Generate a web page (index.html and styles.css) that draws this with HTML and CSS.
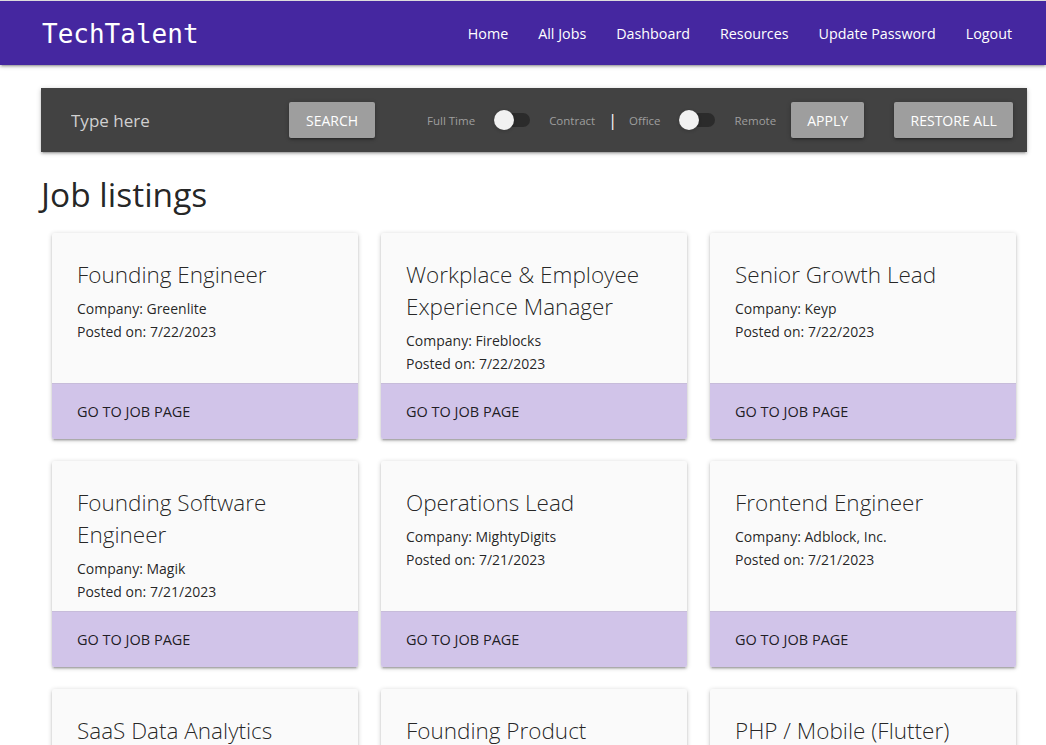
FILE: index.html
```html
<!DOCTYPE html>
<html lang="en">
<head>
<meta charset="utf-8">
<title>TechTalent</title>
<link rel="stylesheet" href="styles.css">
</head>
<body>
<nav class="navbar">
  <a class="brand" href="#">TechTalent</a>
  <ul class="nav-links">
    <li><a href="#">Home</a></li>
    <li><a href="#">All Jobs</a></li>
    <li><a href="#">Dashboard</a></li>
    <li><a href="#">Resources</a></li>
    <li><a href="#">Update Password</a></li>
    <li><a href="#">Logout</a></li>
  </ul>
</nav>

<main class="page">
  <section class="search-bar">
    <input class="search-input" type="text" placeholder="Type here">
    <button class="btn btn-search">Search</button>
    <div class="filters">
      <div class="switch-group">
        <span class="switch-label">Full Time</span>
        <span class="switch"><span class="knob"></span></span>
        <span class="switch-label">Contract</span>
      </div>
      <span class="divider">|</span>
      <div class="switch-group">
        <span class="switch-label">Office</span>
        <span class="switch"><span class="knob"></span></span>
        <span class="switch-label">Remote</span>
      </div>
    </div>
    <button class="btn btn-apply">Apply</button>
    <button class="btn btn-restore">Restore All</button>
  </section>

  <h1 class="heading">Job listings</h1>

  <div class="card-grid">
    <article class="card">
      <div class="card-content">
        <h2 class="card-title">Founding Engineer</h2>
        <p>Company: Greenlite</p>
        <p>Posted on: 7/22/2023</p>
      </div>
      <a class="card-action" href="#">Go to job page</a>
    </article>
    <article class="card">
      <div class="card-content">
        <h2 class="card-title">Workplace &amp; Employee Experience Manager</h2>
        <p>Company: Fireblocks</p>
        <p>Posted on: 7/22/2023</p>
      </div>
      <a class="card-action" href="#">Go to job page</a>
    </article>
    <article class="card">
      <div class="card-content">
        <h2 class="card-title">Senior Growth Lead</h2>
        <p>Company: Keyp</p>
        <p>Posted on: 7/22/2023</p>
      </div>
      <a class="card-action" href="#">Go to job page</a>
    </article>
    <article class="card">
      <div class="card-content">
        <h2 class="card-title">Founding Software Engineer</h2>
        <p>Company: Magik</p>
        <p>Posted on: 7/21/2023</p>
      </div>
      <a class="card-action" href="#">Go to job page</a>
    </article>
    <article class="card">
      <div class="card-content">
        <h2 class="card-title">Operations Lead</h2>
        <p>Company: MightyDigits</p>
        <p>Posted on: 7/21/2023</p>
      </div>
      <a class="card-action" href="#">Go to job page</a>
    </article>
    <article class="card">
      <div class="card-content">
        <h2 class="card-title">Frontend Engineer</h2>
        <p>Company: Adblock, Inc.</p>
        <p>Posted on: 7/21/2023</p>
      </div>
      <a class="card-action" href="#">Go to job page</a>
    </article>
    <article class="card">
      <div class="card-content">
        <h2 class="card-title">SaaS Data Analytics</h2>
        <p>Company: Datalytics</p>
        <p>Posted on: 7/21/2023</p>
      </div>
      <a class="card-action" href="#">Go to job page</a>
    </article>
    <article class="card">
      <div class="card-content">
        <h2 class="card-title">Founding Product Engineer</h2>
        <p>Company: Stealth</p>
        <p>Posted on: 7/21/2023</p>
      </div>
      <a class="card-action" href="#">Go to job page</a>
    </article>
    <article class="card">
      <div class="card-content">
        <h2 class="card-title">PHP / Mobile (Flutter)</h2>
        <p>Company: Appify</p>
        <p>Posted on: 7/21/2023</p>
      </div>
      <a class="card-action" href="#">Go to job page</a>
    </article>
  </div>
</main>
</body>
</html>
```

FILE: styles.css
```css
* {
  box-sizing: border-box;
}

html {
  overflow: hidden;
}

body {
  margin: 0;
  background: #ffffff;
  border-top: 1px solid #dcdcdc;
  font-family: "Open Sans", "Noto Sans", sans-serif;
  color: rgba(0, 0, 0, 0.87);
}

/* ---------- Navbar ---------- */
.navbar {
  height: 64px;
  background: #4527a0;
  display: flex;
  align-items: center;
  justify-content: space-between;
  padding: 0 19px 0 42px;
  box-shadow: 0 2px 2px 0 rgba(0,0,0,.14), 0 3px 1px -2px rgba(0,0,0,.12), 0 1px 5px 0 rgba(0,0,0,.2);
  position: relative;
  z-index: 2;
}

.brand {
  font-family: "DejaVu Sans Mono", "Liberation Mono", monospace;
  font-size: 26px;
  color: #ffffff;
  text-decoration: none;
  padding-top: 2px;
}

.nav-links {
  display: flex;
  list-style: none;
  margin: 0;
  padding: 0;
}

.nav-links a {
  display: block;
  padding: 2px 15px 0;
  line-height: 62px;
  color: #ffffff;
  text-decoration: none;
  font-size: 14.3px;
  white-space: nowrap;
}

/* ---------- Page ---------- */
.page {
  padding: 23px 19px 0 41px;
}

.search-bar {
  height: 64px;
  background: #424242;
  display: flex;
  align-items: center;
  padding: 0 15px 0 30px;
  box-shadow: 0 2px 2px 0 rgba(0,0,0,.14), 0 3px 1px -2px rgba(0,0,0,.12), 0 1px 5px 0 rgba(0,0,0,.2);
}

.search-input {
  width: 218px;
  flex-shrink: 0;
  border: none;
  background: transparent;
  font-family: inherit;
  font-size: 17px;
  color: #d6d6d6;
  outline: none;
  padding: 0;
}

.search-input::placeholder {
  color: #d0d0d0;
}

.btn {
  height: 36px;
  flex-shrink: 0;
  border: none;
  border-radius: 2px;
  background: #9e9e9e;
  color: #ffffff;
  font-family: inherit;
  font-size: 14px;
  text-transform: uppercase;
  white-space: nowrap;
  padding: 0;
  box-shadow: 0 2px 2px 0 rgba(0,0,0,.14), 0 3px 1px -2px rgba(0,0,0,.12), 0 1px 5px 0 rgba(0,0,0,.2);
}

.btn-search {
  width: 86px;
}

.filters {
  display: flex;
  align-items: center;
  margin-left: 52px;
  flex-shrink: 0;
}

.switch-group {
  display: flex;
  align-items: center;
}

.switch-label {
  font-size: 11.5px;
  color: #9e9e9e;
  white-space: nowrap;
}

.switch {
  position: relative;
  width: 36px;
  height: 14px;
  border-radius: 15px;
  background: #2b2b2b;
  margin: 0 19px;
}

.knob {
  position: absolute;
  left: 0;
  top: -3px;
  width: 20px;
  height: 20px;
  border-radius: 50%;
  background: #f1f1f1;
  box-shadow: 0 1px 3px 1px rgba(0,0,0,.1);
}

.divider {
  color: #ffffff;
  font-size: 16px;
  margin: 0 12px 0 13px;
}

.btn-apply {
  width: 73px;
  margin-left: 15px;
}

.btn-restore {
  width: 119px;
  margin-left: 30px;
}

.heading {
  font-weight: 400;
  font-size: 33.5px;
  line-height: 40px;
  margin: 22px 0 19px;
  color: rgba(0, 0, 0, 0.87);
}

/* ---------- Cards ---------- */
.card-grid {
  display: grid;
  grid-template-columns: repeat(3, 306px);
  gap: 22px 23px;
  padding: 0 11px;
}

.card {
  height: 206px;
  display: flex;
  flex-direction: column;
  background: #fafafa;
  border-radius: 2px;
  box-shadow: 0 2px 2px 0 rgba(0,0,0,.14), 0 3px 1px -2px rgba(0,0,0,.12), 0 1px 5px 0 rgba(0,0,0,.2);
}

.card-content {
  flex: 1;
  padding: 26px 25px 0;
}

.card-title {
  margin: 0 0 6px;
  font-size: 22.5px;
  font-weight: 300;
  line-height: 32px;
  color: rgba(0, 0, 0, 0.87);
}

.card-content p {
  margin: 0;
  font-size: 14px;
  line-height: 23px;
  color: rgba(0, 0, 0, 0.87);
}

.card-action {
  height: 56px;
  flex-shrink: 0;
  display: flex;
  align-items: center;
  padding: 0 25px;
  background: #d1c4e9;
  color: rgba(0, 0, 0, 0.87);
  text-transform: uppercase;
  text-decoration: none;
  font-size: 14.5px;
  border-top: 1px solid rgba(160, 160, 160, 0.2);
  border-radius: 0 0 2px 2px;
}
```
